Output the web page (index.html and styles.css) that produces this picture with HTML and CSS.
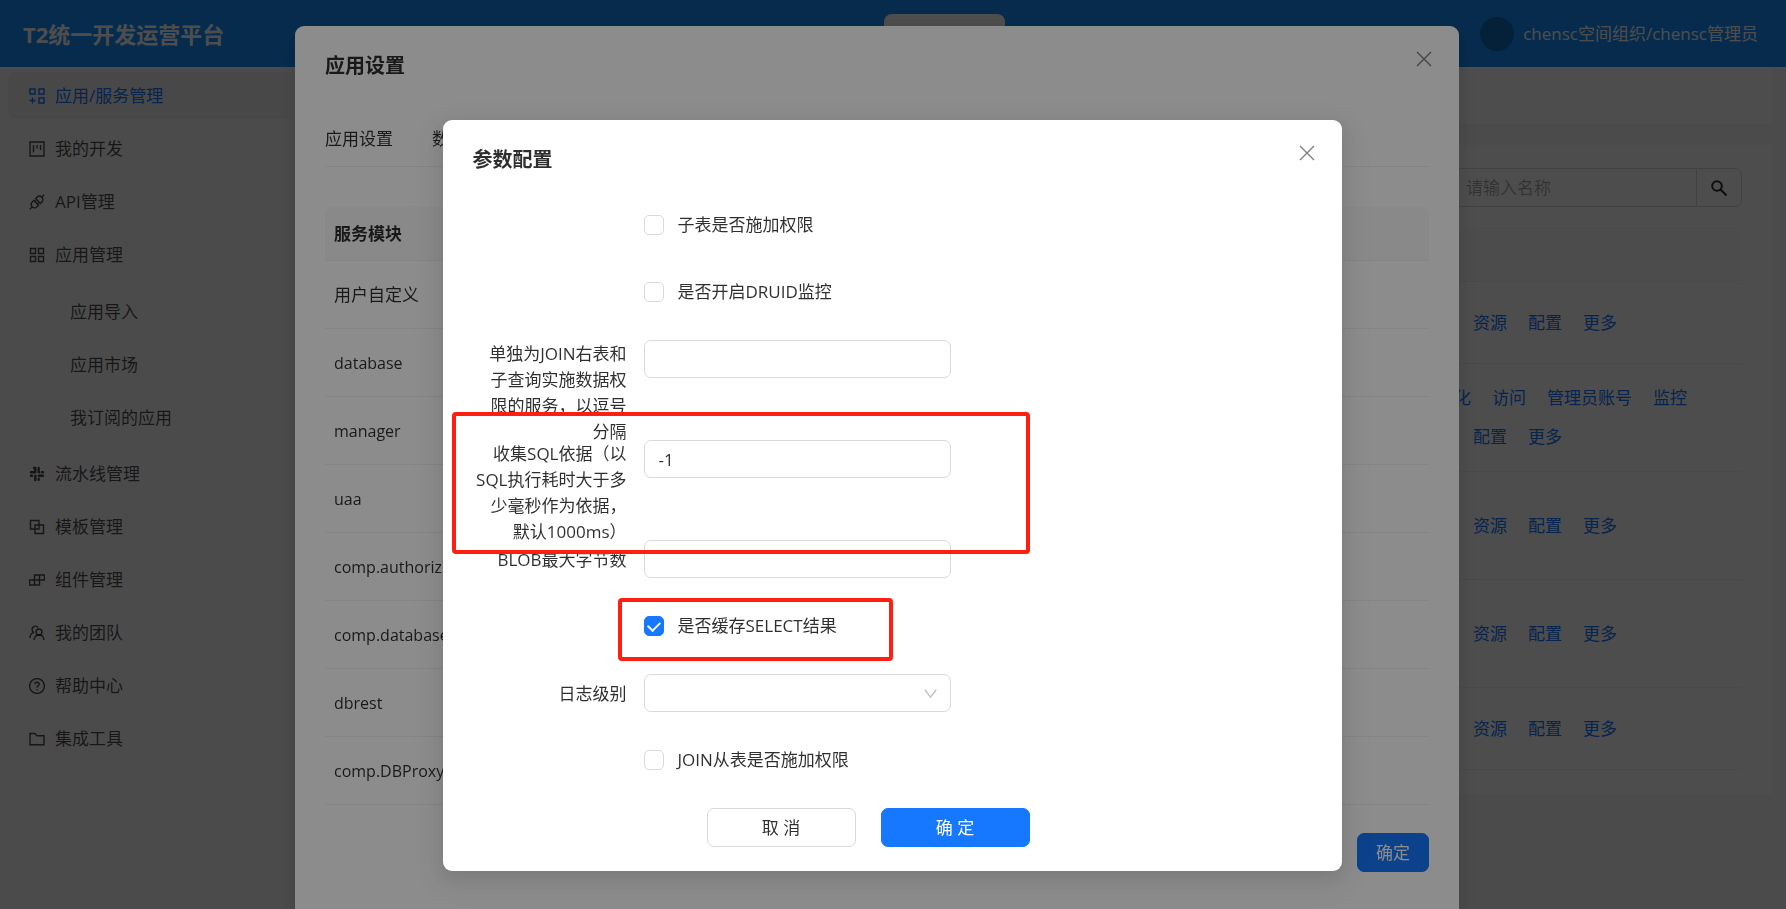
FILE: index.html
```html
<!DOCTYPE html>
<html lang="zh-CN">
<head>
<meta charset="utf-8">
<title>T2统一开发运营平台</title>
<link rel="stylesheet" href="styles.css">
</head>
<body>
<div class="app">
  <header class="topbar">
    <h1 class="brand">T2统一开发运营平台</h1>
    <div class="topbar-tab"></div>
    <div class="user"><span class="avatar"></span><span>chensc空间组织/chensc管理员</span></div>
  </header>
  <div class="body">
    <nav class="sidebar">
      <ul class="menu">
        <li><a class="item selected" href="#"><svg class="icon" viewBox="0 0 16 16"><path d="M1 1h5v5H1zM10 1h5v5h-5zM10 10h5v5h-5zM3.500 9.500v6M.5 12.500h6"/></svg>应用/服务管理</a></li>
        <li><a class="item" href="#"><svg class="icon" viewBox="0 0 16 16"><path d="M1 1h14v14H1zM4.500 4v7.500M8 4v3.500M11.500 4v5"/></svg>我的开发</a></li>
        <li><a class="item" href="#"><svg class="icon" viewBox="0 0 16 16"><path d="M.8 15.200l2.400-2.400M12.800 3.200L15.200.8M3.200 12.800c-1.500-1.700-1.300-3.500 0-4.800L4.800 6.400l4.800 4.800L8 12.800c-1.400 1.300-3.200 1.400-4.800 0zM12.800 3.200c-1.600-1.500-3.400-1.300-4.800 0L6.600 4.600l4.800 4.800L12.800 8c1.400-1.400 1.400-3.200 0-4.800zM6 7.600l1.200-1.200M8.400 10l1.200-1.200"/></svg>API管理</a></li>
        <li><a class="item" href="#"><svg class="icon" viewBox="0 0 16 16"><path d="M1.500 1.500h5v5h-5zM9.500 1.500h5v5h-5zM9.500 9.500h5v5h-5zM1.500 9.500h5v5h-5z"/></svg>应用管理</a>
          <ul class="submenu">
            <li><a class="item" href="#">应用导入</a></li>
            <li><a class="item" href="#">应用市场</a></li>
            <li><a class="item" href="#">我订阅的应用</a></li>
          </ul>
        </li>
        <li><a class="item" href="#"><svg class="icon slack" viewBox="0 0 16 16"><path d="M6.300 2v4.200M2 6.300h4.300M9.700 2v4.300M14 6.300h-1M9.700 9.700H14M9.700 13.800v-1M6.300 9.700v4.300M2 9.700h1M5 2h1M9.700 6.300h.5"/></svg>流水线管理</a></li>
        <li><a class="item" href="#"><svg class="icon" viewBox="0 0 16 16"><path d="M1.500 1.500h8.500v8.500H1.500zM6 6h8.500v8.500H6z"/></svg>模板管理</a></li>
        <li><a class="item" href="#"><svg class="icon" viewBox="0 0 16 16"><path d="M5.500 3h10v5h-10zM.5 8h10v5H.5zM10.500 3v5M5.500 8v5"/></svg>组件管理</a></li>
        <li><a class="item" href="#"><svg class="icon" viewBox="0 0 16 16"><circle cx="10" cy="7" r="3"/><path d="M5 15c.3-3 2.200-5 5-5s4.800 2 5 5M9 2.500A3.300 3.300 0 1 0 4.500 7.200M1 13c0-3 1.500-5 4-5.700"/></svg>我的团队</a></li>
        <li><a class="item" href="#"><svg class="icon" viewBox="0 0 16 16"><circle cx="8" cy="8" r="7.400"/><path d="M5.800 6.200C5.900 3.500 10.200 3.500 10.200 6.200c0 1.600-2.200 1.700-2.200 3.500M8 11v1.300"/></svg>帮助中心</a></li>
        <li><a class="item" href="#"><svg class="icon" viewBox="0 0 16 16"><path d="M1 2.500h5l2 2.200h7v9H1z"/></svg>集成工具</a></li>
      </ul>
    </nav>
    <main class="main">
      <div class="page-head"></div>
      <section class="card">
        <form class="search">
          <input class="search-input" type="text" placeholder="请输入名称" aria-label="请输入名称">
          <button class="search-btn" type="button" aria-label="搜索"><svg class="icon bold" viewBox="0 0 16 16"><circle cx="6" cy="6" r="4.800"/><path d="M9.500 9.500l6 6"/></svg></button>
        </form>
        <div class="list">
          <div class="list-head"></div>
          <div class="list-row"><div class="links"><a href="#">资源</a><a href="#">配置</a><a href="#">更多</a></div></div>
          <div class="list-row tall"><div class="links full"><a href="#">化</a><a href="#">访问</a><a href="#">管理员账号</a><a href="#">监控</a></div><div class="links"><a href="#">配置</a><a href="#">更多</a></div></div>
          <div class="list-row tall"><div class="links"><a href="#">资源</a><a href="#">配置</a><a href="#">更多</a></div></div>
          <div class="list-row tall"><div class="links"><a href="#">资源</a><a href="#">配置</a><a href="#">更多</a></div></div>
          <div class="list-row"><div class="links"><a href="#">资源</a><a href="#">配置</a><a href="#">更多</a></div></div>
        </div>
      </section>
    </main>
  </div>
</div>

<div class="mask outer">
  <section class="modal settings" role="dialog" aria-labelledby="settings-title">
    <div class="modal-head">
      <h2 id="settings-title">应用设置</h2>
      <button class="close" type="button" aria-label="关闭"><svg class="icon" viewBox="0 0 16 16"><path d="M1 1l14 14M15 1L1 15"/></svg></button>
    </div>
    <div class="tabs"><button type="button">应用设置</button><button type="button">数</button></div>
    <table class="modules">
      <thead><tr><th>服务模块</th></tr></thead>
      <tbody>
        <tr><td>用户自定义</td></tr>
        <tr><td>database</td></tr>
        <tr><td>manager</td></tr>
        <tr><td>uaa</td></tr>
        <tr><td>comp.authoriz</td></tr>
        <tr><td>comp.database</td></tr>
        <tr><td>dbrest</td></tr>
        <tr><td>comp.DBProxy</td></tr>
      </tbody>
    </table>
    <div class="modal-foot">
      <button class="btn primary" type="button">确定</button>
    </div>
  </section>
</div>

<div class="mask">
  <section class="modal params" role="dialog" aria-labelledby="params-title">
    <div class="modal-head">
      <h2 id="params-title">参数配置</h2>
      <button class="close" type="button" aria-label="关闭"><svg class="icon" viewBox="0 0 16 16"><path d="M1 1l14 14M15 1L1 15"/></svg></button>
    </div>
    <form class="form">
      <div class="row"><label class="check"><input type="checkbox">子表是否施加权限</label></div>
      <div class="row"><label class="check"><input type="checkbox">是否开启DRUID监控</label></div>
      <div class="row multi"><label class="label" for="join">单独为JOIN右表和<br>子查询实施数据权<br>限的服务，以逗号<br>分隔</label><input class="field" id="join" type="text"></div>
      <div class="row multi"><label class="label" for="sql">收集SQL依据（以<br>SQL执行耗时大于多<br>少毫秒作为依据，<br>默认1000ms）</label><input class="field" id="sql" type="text" value="-1"></div>
      <div class="row"><label class="label" for="blob">BLOB最大字节数</label><input class="field" id="blob" type="text"></div>
      <div class="row"><label class="check"><input type="checkbox" checked>是否缓存SELECT结果</label></div>
      <div class="row"><label class="label" for="level">日志级别</label>
        <div class="select"><select class="field" id="level"><option></option></select><svg class="icon" viewBox="0 0 16 16"><path d="M2 4l6 8 6-8"/></svg></div></div>
      <div class="row"><label class="check"><input type="checkbox">JOIN从表是否施加权限</label></div>
      <div class="actions">
        <button class="btn wide" type="button">取 消</button>
        <button class="btn wide primary" type="button">确 定</button>
      </div>
    </form>
    <div class="highlight sql-mark"></div>
    <div class="highlight cache-mark"></div>
  </section>
</div>
</body>
</html>
```

FILE: styles.css
```css
* { box-sizing: border-box; }
body {
  margin: 0;
  height: 100vh;
  overflow: hidden;
  font: 17px/26px "Open Sans", "Noto Sans CJK SC", sans-serif;
  color: rgba(0, 0, 0, .82);
  background: #f8f8f8;
}
h1, h2, ul { margin: 0; padding: 0; }
ul { list-style: none; }
a { color: #1677ff; text-decoration: none; }
button, input, select { font: inherit; color: inherit; margin: 0; }
button { cursor: pointer; }
.icon { width: 16px; height: 16px; flex: none; fill: none; stroke: currentColor; stroke-width: 1.4; }
.icon.bold { stroke-width: 2; }
.icon.slack { stroke-width: 2.4; stroke-linecap: round; }

.app { min-height: 100vh; display: flex; flex-direction: column; }
.topbar {
  height: 67px;
  display: flex;
  align-items: center;
  padding: 0 28px 0 23px;
  background: #188ffc;
  color: #fff;
}
.brand { flex: 0 0 861px; font-size: 22px; line-height: 30px; font-weight: 700; }
.topbar-tab { align-self: flex-end; width: 121px; height: 53px; border-radius: 8px 8px 0 0; background: #fff; }
.user { margin-left: auto; display: flex; align-items: center; gap: 9px; }
.avatar { width: 34px; height: 34px; border-radius: 50%; background: #126bbd; }

.body { flex: 1; display: flex; }
.sidebar { flex: 0 0 320px; padding: 5px 8px; }
.menu, .submenu { display: flex; flex-direction: column; gap: 6px; }
.item {
  height: 47px;
  display: flex;
  align-items: center;
  gap: 10px;
  padding-left: 21px;
  border-radius: 8px;
  color: rgba(0, 0, 0, .7);
}
.item.selected { background: #efefef; color: #1677ff; }
.submenu { padding: 10px 0 3px; }
.submenu .item { padding-left: 62px; }

.main { flex: 1; display: flex; flex-direction: column; padding-right: 14px; }
.page-head { height: 58px; background: #fff; border-bottom: 1px solid #f0f0f0; margin-bottom: 20px; }
.card { background: #fff; padding: 23px 30px 24px; }
.search { display: flex; justify-content: flex-end; }
.search-input {
  width: 244px;
  height: 39px;
  padding: 0 12px;
  border: 1px solid #d9d9d9;
  border-radius: 7px 0 0 7px;
  background: #fff;
}
.search-input::placeholder { color: rgba(0, 0, 0, .35); }
.search-btn {
  width: 46px;
  height: 39px;
  margin-left: -1px;
  padding: 0;
  display: flex;
  align-items: center;
  justify-content: center;
  border: 1px solid #d9d9d9;
  border-radius: 0 7px 7px 0;
  background: #fff;
}
.list { margin-top: 20px; }
.list-head { height: 55px; background: #fafafa; border-bottom: 1px solid #f0f0f0; border-radius: 8px 8px 0 0; }
.list-row {
  min-height: 82px;
  display: flex;
  flex-direction: column;
  justify-content: center;
  align-items: flex-end;
  gap: 13px;
  border-bottom: 1px solid #f0f0f0;
}
.list-row.tall { min-height: 108px; }
.links { width: 288px; display: flex; gap: 21px; padding-left: 19px; }
.links.full { padding-left: 0; }

.mask {
  position: fixed;
  inset: 0;
  display: flex;
  justify-content: center;
  align-items: flex-start;
  padding: 120px 2px 0 0;
  background: rgba(0, 0, 0, .45);
}
.mask.outer { padding: 26px 32px 0 0; }
.modal {
  position: relative;
  max-width: 100%;
  padding: 24px 30px;
  border-radius: 9px;
  background: #fff;
  box-shadow: 0 6px 16px rgba(0, 0, 0, .08), 0 9px 28px 8px rgba(0, 0, 0, .05);
}
.modal-head { display: flex; justify-content: space-between; align-items: flex-start; }
.modal-head h2 { font-size: 20px; line-height: 31px; font-weight: 700; }
.close { display: flex; margin-right: -5px; padding: 1px 2px; border: 0; background: none; color: rgba(0, 0, 0, .5); }

.settings { width: 1164px; min-height: 100vh; }
.tabs { display: flex; gap: 39px; margin: 40px 0; padding-bottom: 9px; border-bottom: 1px solid #f0f0f0; }
.tabs button { padding: 5px 0; border: 0; background: none; }
.modules { width: 100%; border-collapse: separate; border-spacing: 0; text-align: left; }
.modules th { height: 54px; padding: 0 9px; background: #fafafa; border-bottom: 1px solid #f0f0f0; border-radius: 8px 8px 0 0; }
.modules td { height: 68px; padding: 0 9px; border-bottom: 1px solid #f0f0f0; font-size: 16px; }
.modules tr:first-child td { font-size: 17px; }
.modal-foot { display: flex; justify-content: flex-end; gap: 10px; margin-top: 28px; }
.btn {
  height: 39px;
  padding: 0 18px;
  border: 1px solid #d9d9d9;
  border-radius: 7px;
  background: #fff;
}
.btn.primary { border-color: #1677ff; background: #1677ff; color: #fff; }
.btn.wide { width: 149px; }

.params { width: 899px; }
.form { display: flex; flex-direction: column; gap: 29px; margin-top: 31px; }
.row { height: 38px; display: grid; grid-template-columns: 154px 307px; column-gap: 17px; }
.row.multi { height: 71px; }
.label { text-align: right; line-height: 40px; white-space: nowrap; }
.multi .label { padding-top: 1px; line-height: 26px; }
.check { grid-column: 2; display: flex; align-items: center; gap: 14px; white-space: nowrap; }
.check input {
  appearance: none;
  width: 20px;
  height: 20px;
  border: 1px solid #d9d9d9;
  border-radius: 5px;
  display: grid;
  place-items: center;
}
.check input:checked { border-color: #1677ff; background: #1677ff; }
.check input:checked::after {
  content: "";
  width: 6px;
  height: 10px;
  margin-bottom: 3px;
  border: solid #fff;
  border-width: 0 2px 2px 0;
  transform: rotate(45deg);
}
.field {
  width: 100%;
  height: 38px;
  padding: 0 14px;
  border: 1px solid #d9d9d9;
  border-radius: 7px;
  background: #fff;
  appearance: none;
}
.select { position: relative; }
.select .icon { position: absolute; right: 13px; top: 12px; width: 15px; height: 15px; color: #bfbfbf; }
.actions { display: flex; justify-content: center; gap: 25px; margin-left: -48px; }

/* callout frames drawn over the form */
.highlight { position: absolute; border: 4px solid #ff1f10; border-radius: 4px; pointer-events: none; }
.sql-mark { left: 9px; top: 292px; width: 578px; height: 142px; }
.cache-mark { left: 175px; top: 478px; width: 275px; height: 63px; }
```
